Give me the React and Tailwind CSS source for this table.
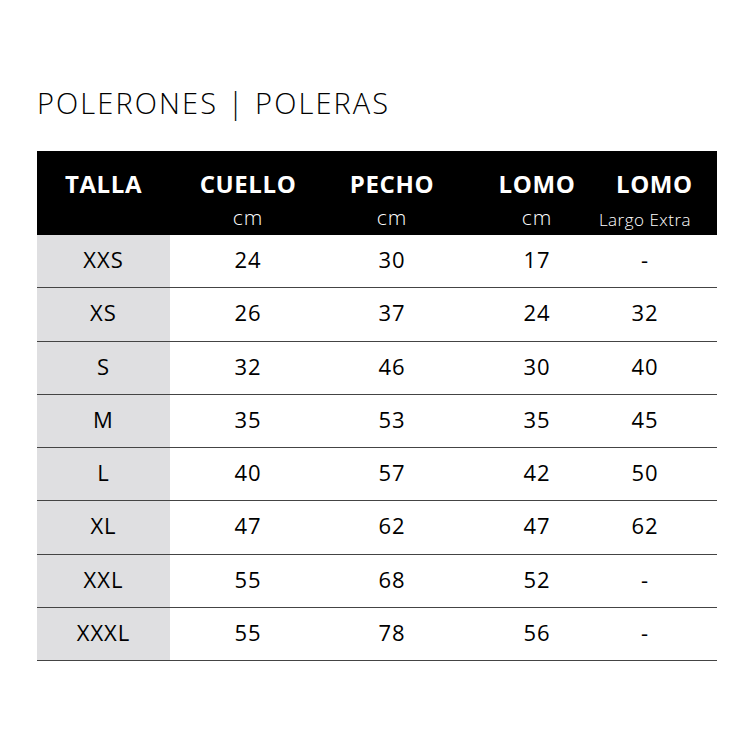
import React from 'react';

const rows = [
  ['XXS', '24', '30', '17', '-'],
  ['XS', '26', '37', '24', '32'],
  ['S', '32', '46', '30', '40'],
  ['M', '35', '53', '35', '45'],
  ['L', '40', '57', '42', '50'],
  ['XL', '47', '62', '47', '62'],
  ['XXL', '55', '68', '52', '-'],
  ['XXXL', '55', '78', '56', '-'],
];

const cols = 'grid grid-cols-[133px_156px_132px_158px_101px]';

export default function App() {
  return (
    <div className="w-[750px] h-[750px] bg-white font-['Open_Sans',sans-serif] text-black">
      <div className="pl-[37px] pt-[83px]">
        {/* Title */}
        <h1 className="text-[29px] font-light leading-[40px] tracking-[2.1px] h-[68px] whitespace-nowrap">
          POLERONES | POLERAS
        </h1>

        <div className="w-[680px]">
          {/* Header */}
          <div className={`${cols} bg-black text-white h-[84px] pt-[18px]`}>
            <div className="text-center text-[24px] font-bold leading-[30px] tracking-[0.6px]">TALLA</div>
            <div className="text-center">
              <div className="text-[24px] font-bold leading-[30px] tracking-[0.6px]">CUELLO</div>
              <div className="text-[21px] font-light leading-[37px] tracking-[1px]">cm</div>
            </div>
            <div className="text-center">
              <div className="text-[24px] font-bold leading-[30px] tracking-[0.6px]">PECHO</div>
              <div className="text-[21px] font-light leading-[37px] tracking-[1px]">cm</div>
            </div>
            <div className="text-center">
              <div className="text-[24px] font-bold leading-[30px] tracking-[0.6px]">LOMO</div>
              <div className="text-[21px] font-light leading-[37px] tracking-[1px]">cm</div>
            </div>
            <div className="text-center pr-[43px] whitespace-nowrap">
              <div className="text-[24px] font-bold leading-[30px] tracking-[0.6px]">LOMO</div>
              <div className="text-[17px] font-light leading-[42px] tracking-[0.5px] -mx-[20px]">Largo Extra</div>
            </div>
          </div>

          {/* Rows */}
          {rows.map((r) => (
            <div key={r[0]} className={`${cols} h-[53.25px] border-b-[1.5px] border-[#444] text-[22px] font-normal tracking-[1px]`}>
              <div className="bg-[#dfdfe1] flex items-center justify-center pb-[3px]">{r[0]}</div>
              <div className="flex items-center justify-center pb-[3px]">{r[1]}</div>
              <div className="flex items-center justify-center pb-[3px]">{r[2]}</div>
              <div className="flex items-center justify-center pb-[3px]">{r[3]}</div>
              <div className="flex items-center justify-center pr-[43px] pb-[3px]">{r[4]}</div>
            </div>
          ))}
        </div>
      </div>
    </div>
  );
}
